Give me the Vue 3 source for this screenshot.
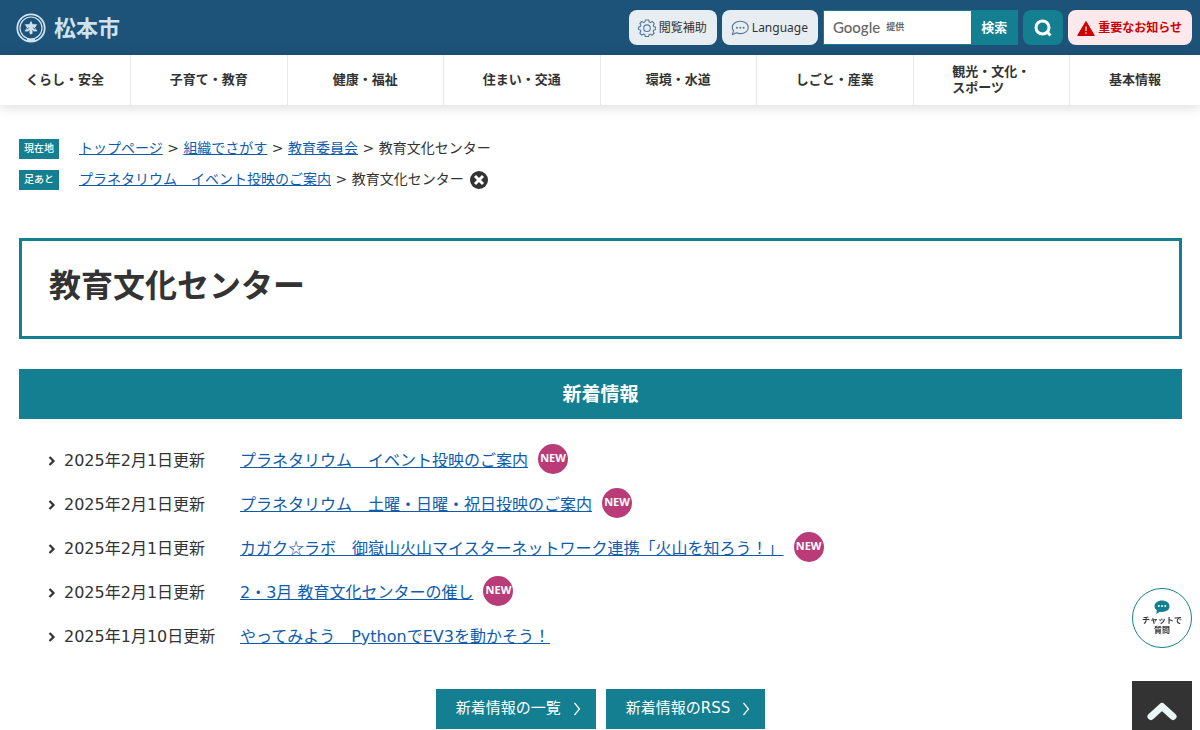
<script setup>
import { ref } from 'vue'

const query = ref('')

const categories = [
  ['くらし・安全'],
  ['子育て・教育'],
  ['健康・福祉'],
  ['住まい・交通'],
  ['環境・水道'],
  ['しごと・産業'],
  ['観光・文化・', 'スポーツ'],
  ['基本情報'],
]

const trail = ['トップページ', '組織でさがす', '教育委員会']
const visited = ['プラネタリウム　イベント投映のご案内']

const news = [
  { date: '2025年2月1日更新', title: 'プラネタリウム　イベント投映のご案内', isNew: true },
  { date: '2025年2月1日更新', title: 'プラネタリウム　土曜・日曜・祝日投映のご案内', isNew: true },
  {
    date: '2025年2月1日更新',
    title: 'カガク☆ラボ　御嶽山火山マイスターネットワーク連携「火山を知ろう！」',
    isNew: true,
  },
  { date: '2025年2月1日更新', title: '2・3月 教育文化センターの催し', isNew: true },
  { date: '2025年1月10日更新', title: 'やってみよう　PythonでEV3を動かそう！', isNew: false },
]

// Keeps the star in its own part so that it can use the full-width glyph.
const titleParts = (title) => title.split(/(☆)/)
</script>

<template>
  <div class="page">
    <header class="header">
      <a class="brand" href="#">
        <svg class="emblem" viewBox="0 0 30 30" aria-hidden="true">
          <circle cx="15" cy="15" r="13.700" fill="none" stroke="currentColor" stroke-width="1.800" />
          <circle cx="15" cy="15" r="11" fill="none" stroke="currentColor" stroke-width="1.200" />
          <path d="M11 25q4 1.500 8 0v3q-4 1.300-8 0z" fill="currentColor" />
          <path
            d="M15 7.800l1.700 3.500h4.500l-2.200 3.500 2.500 3.400-3.600.3-1.400-1.700v3.600L15 21.600l-1.500-1.200v-3.600l-1.400 1.700-3.600-.3 2.500-3.400-2.200-3.500h4.500z"
            fill="currentColor"
          />
          <path d="M12.600 14.500l-1.600 2M17.400 14.500l1.600 2" stroke="#1d5279" stroke-width="1" />
        </svg>
        <span class="brand-name">松本市</span>
      </a>
      <div class="tools">
        <button class="tool" type="button">
          <svg class="tool-icon" viewBox="0 0 18 18" fill="none" stroke="#54779f" stroke-width="1.100" aria-hidden="true">
            <path
              d="M7.300 1h3.400l.5 2 1.300.6 1.900-1.100 1.900 2.100-1 1.800.5 1.200 1.900.5v2.400l-1.900.6-.6 1.300 1 1.900-2 1.900-1.800-1-1.300.5-.6 1.900H7.300l-.5-1.900-1.300-.6-1.900 1-1.800-1.900 1-1.900-.5-1.200-1.900-.6V8.100l1.900-.5.6-1.200-1-1.900 1.900-2 1.800 1.100 1.300-.6z"
              stroke-linejoin="round"
            />
            <circle cx="9" cy="9.200" r="3.300" />
          </svg>
          <span>閲覧補助</span>
        </button>
        <button class="tool" type="button">
          <svg class="tool-icon" viewBox="0 0 18 18" fill="none" stroke="#54779f" stroke-width="1.100" aria-hidden="true">
            <path d="M9.300 2.300c4.600 0 7.900 2.500 7.900 6.100s-3.300 6.200-7.900 6.200c-1.600 0-2.900-.3-4.100-.8L1.300 15.700l1.200-4C1.700 10.700 1.300 9.600 1.300 8.400c0-3.600 3.400-6.100 8-6.100z" stroke-linejoin="round" />
            <g fill="#54779f" stroke="none">
              <circle cx="6" cy="8.800" r="1" /><circle cx="9.300" cy="8.800" r="1" /><circle cx="12.600" cy="8.800" r="1" />
            </g>
          </svg>
          <span>Language</span>
        </button>
        <form class="search" @submit.prevent>
          <label class="search-label" for="site-search"><b>Google</b><small>提供</small></label>
          <input id="site-search" v-model="query" class="search-input" type="text" />
          <button class="search-submit" type="submit">検索</button>
        </form>
        <button class="lens" type="button" aria-label="検索メニュー">
          <svg viewBox="0 0 18 18" fill="none" stroke="#fff" stroke-width="3" aria-hidden="true">
            <circle cx="8.500" cy="8.500" r="6.500" /><path d="M12.500 12.500l4 4" />
          </svg>
        </button>
        <button class="tool alert" type="button">
          <svg class="tool-icon" viewBox="0 0 18 18" aria-hidden="true">
            <path d="M9 2.500L17.300 16.500H.7z" fill="#c00" stroke="#c00" stroke-linejoin="round" />
            <path d="M9 7.500v4.500M9 13.200v1.600" stroke="#fde8ec" stroke-width="1.300" />
          </svg>
          <span>重要なお知らせ</span>
        </button>
      </div>
    </header>

    <nav class="nav">
      <a v-for="lines in categories" :key="lines[0]" class="nav-item" href="#">
        <span><span v-for="line in lines" :key="line" class="nav-line">{{ line }}</span></span>
      </a>
    </nav>

    <main class="main">
      <div class="crumbs">
        <div class="crumb-row">
          <span class="crumb-tag">現在地</span>
          <span class="crumb-path">
            <template v-for="item in trail" :key="item"><a href="#">{{ item }}</a> &gt; </template>教育文化センター
          </span>
        </div>
        <div class="crumb-row">
          <span class="crumb-tag">足あと</span>
          <span class="crumb-path">
            <template v-for="item in visited" :key="item"><a href="#">{{ item }}</a> &gt; </template>教育文化センター
          </span>
          <button class="clear" type="button" aria-label="足あとを削除">
            <svg viewBox="0 0 18 18" aria-hidden="true">
              <circle cx="9" cy="9" r="9" fill="#333" />
              <path d="M5 5l8 8M13 5l-8 8" stroke="#fff" stroke-width="3" />
            </svg>
          </button>
        </div>
      </div>

      <h1 class="title">教育文化センター</h1>

      <section>
        <h2 class="heading">新着情報</h2>
        <ul class="news">
          <li v-for="item in news" :key="item.title" class="news-row">
            <svg class="news-arrow" viewBox="0 0 8 10" fill="none" stroke="#333" stroke-width="2.200" aria-hidden="true">
              <path d="M1.500 1l4 4-4 4" />
            </svg>
            <span class="news-date">{{ item.date }}</span>
            <a href="#"><span
              v-for="(part, i) in titleParts(item.title)"
              :key="i"
              :class="{ symbol: part === '☆' }"
            >{{ part }}</span></a>
            <span v-if="item.isNew" class="badge">NEW</span>
          </li>
        </ul>
        <div class="actions">
          <a v-for="label in ['新着情報の一覧', '新着情報のRSS']" :key="label" class="action" href="#">
            <span class="action-label">{{ label }}</span>
            <svg viewBox="0 0 8 14" fill="none" stroke="#fff" stroke-width="1.200" aria-hidden="true">
              <path d="M1.500 1l5 6-5 6" />
            </svg>
          </a>
        </div>
      </section>
    </main>

    <aside class="floating">
      <button class="chat" type="button">
        <svg viewBox="0 0 16 14" aria-hidden="true">
          <path d="M8 .5c4.200 0 7.500 2.200 7.500 5.800S12.200 12 8 12c-.7 0-1.400-.1-2-.2L2.300 14l.5-3.800C1.300 9.200.5 7.900.5 6.300.5 2.700 3.800.5 8 .5z" fill="#147f91" />
          <g fill="#fff"><circle cx="4.800" cy="6" r="1" /><circle cx="8" cy="6" r="1" /><circle cx="11.200" cy="6" r="1" /></g>
        </svg>
        <span>チャットで<br />質問</span>
      </button>
      <a class="to-top" href="#" aria-label="ページの先頭へ">
        <svg viewBox="0 0 32 20" fill="none" stroke="#eaf5f5" stroke-width="7" stroke-linecap="round" stroke-linejoin="round" aria-hidden="true">
          <path d="M5 15.500L16 5.500l11 10" />
        </svg>
      </a>
    </aside>
  </div>
</template>

<style>
body {
  margin: 0;
  background: #fff;
  overflow: hidden;
}
</style>

<style scoped>
.page {
  color: #333;
  font-family: "DejaVu Sans", "Noto Sans CJK JP", sans-serif;
  font-size: 16px;
}
.page * {
  box-sizing: border-box;
}
button,
input {
  margin: 0;
  padding: 0;
  border: 0;
  font: inherit;
  color: inherit;
}
a {
  color: #0f5cad;
}
svg {
  display: block;
  flex: none;
}
.header {
  display: flex;
  align-items: center;
  justify-content: space-between;
  height: 55px;
  padding: 0 8px 0 16px;
  background: #1d5279;
}
.brand {
  display: flex;
  align-items: center;
  gap: 8px;
  color: #cfe3ef;
  font-family: "Noto Sans CJK JP", sans-serif;
  font-size: 22px;
  font-weight: 700;
  line-height: 32px;
  text-decoration: none;
}
.brand-name {
  padding-bottom: 4px;
}
.emblem {
  width: 30px;
  height: 30px;
}
.tools {
  display: flex;
  align-items: center;
  gap: 5px;
}
.tool {
  display: flex;
  align-items: center;
  gap: 3px;
  height: 35px;
  padding: 0 10px 0 9px;
  border-radius: 8px;
  background: #e8edf1;
  font-family: "Noto Sans", "Noto Sans CJK JP", sans-serif;
  font-size: 12px;
  line-height: 20px;
}
.tool-icon {
  width: 18px;
  height: 18px;
}
.alert {
  background: #fde8ec;
  color: #c00;
  font-weight: 700;
}
.search {
  display: flex;
  height: 35px;
  border: 1px solid #147f91;
  background: #fff;
}
.search-label {
  display: flex;
  align-items: center;
  gap: 6px;
  padding: 0 0 2px 9px;
  color: #666;
}
.search-label b {
  font-family: Lato, sans-serif;
  font-size: 15px;
  font-weight: 500;
}
.search-label small {
  font-family: "Noto Sans CJK JP", sans-serif;
  font-size: 9px;
  font-weight: 700;
}
.search-input {
  width: 67px;
  background: transparent;
  outline: 0;
}
.search-submit {
  width: 46px;
  padding-bottom: 2px;
  background: #147f91;
  color: #fff;
  font-size: 13px;
  font-weight: 700;
}
.lens {
  display: flex;
  align-items: center;
  justify-content: center;
  width: 40px;
  height: 35px;
  border-radius: 8px;
  background: #147f91;
}
.lens svg {
  width: 18px;
  height: 18px;
}
.nav {
  display: grid;
  grid-template-columns: 131px repeat(6, 1fr) 130px;
  height: 50px;
  box-shadow: 0 2px 12px rgba(0, 0, 0, 0.15);
}
.nav-item {
  display: flex;
  align-items: center;
  justify-content: center;
  border-right: 1px solid #e8e8e8;
  color: #333;
  font-size: 13px;
  font-weight: 700;
  line-height: 16px;
  text-decoration: none;
}
.nav-item:last-child {
  border-right: 0;
}
.nav-line {
  display: block;
}
.main {
  padding: 28px 18px 0 19px;
}
.crumbs {
  display: grid;
  gap: 1px;
}
.crumb-row {
  display: flex;
  align-items: center;
  height: 30px;
}
.crumb-tag {
  width: 40px;
  height: 20px;
  margin: 2px 20px 0 0;
  background: #147f91;
  color: #fff;
  font-size: 10px;
  font-weight: 500;
  line-height: 20px;
  text-align: center;
}
.crumb-path {
  font-size: 14px;
  line-height: 24px;
}
.clear {
  margin: 2px 0 0 6px;
  border-radius: 50%;
  background: none;
}
.clear svg {
  width: 18px;
  height: 18px;
}
.title {
  margin: 44px 0 30px;
  padding: 21px 27px 26px;
  border: 3px solid #147f91;
  font-size: 32px;
  font-weight: 700;
  line-height: 48px;
}
.heading {
  margin: 0;
  background: #147f91;
  color: #fff;
  font-size: 19px;
  font-weight: 700;
  line-height: 50px;
  text-align: center;
}
.news {
  margin: 18px 0 0;
  padding: 0 0 0 29px;
  list-style: none;
}
.news-row {
  display: flex;
  align-items: center;
  height: 44px;
  padding-top: 3px;
  line-height: 24px;
}
.news-arrow {
  width: 8px;
  height: 10px;
}
.news-date {
  width: 176px;
  margin-left: 8px;
}
.symbol {
  font-family: "Noto Sans CJK JP", sans-serif;
  line-height: 1;
}
.badge {
  width: 30px;
  height: 30px;
  margin: 0 0 3px 10px;
  border-radius: 50%;
  background: #b93b77;
  color: #fff;
  font-family: "Open Sans", sans-serif;
  font-size: 11px;
  font-weight: 700;
  line-height: 28px;
  text-align: center;
}
.actions {
  display: flex;
  justify-content: center;
  gap: 10px;
  margin-top: 32px;
}
.action {
  display: flex;
  align-items: center;
  gap: 12px;
  height: 40px;
  padding: 0 15px 0 20px;
  background: #147f91;
  color: #fff;
  font-size: 15px;
  text-decoration: none;
}
.action-label {
  padding-bottom: 5px;
}
.action svg {
  width: 8px;
  height: 14px;
}
.floating {
  position: fixed;
  right: 8px;
  bottom: -11px;
  display: grid;
  gap: 33px;
}
.chat {
  display: flex;
  flex-direction: column;
  align-items: center;
  justify-content: center;
  gap: 2px;
  width: 60px;
  height: 60px;
  border: 1px solid #147f91;
  border-radius: 50%;
  background: #fff;
  font-size: 8px;
  font-weight: 700;
  line-height: 10px;
}
.chat svg {
  width: 16px;
  height: 14px;
}
.to-top {
  display: flex;
  align-items: center;
  justify-content: center;
  height: 60px;
  background: #333;
}
.to-top svg {
  width: 32px;
  height: 20px;
}
</style>
